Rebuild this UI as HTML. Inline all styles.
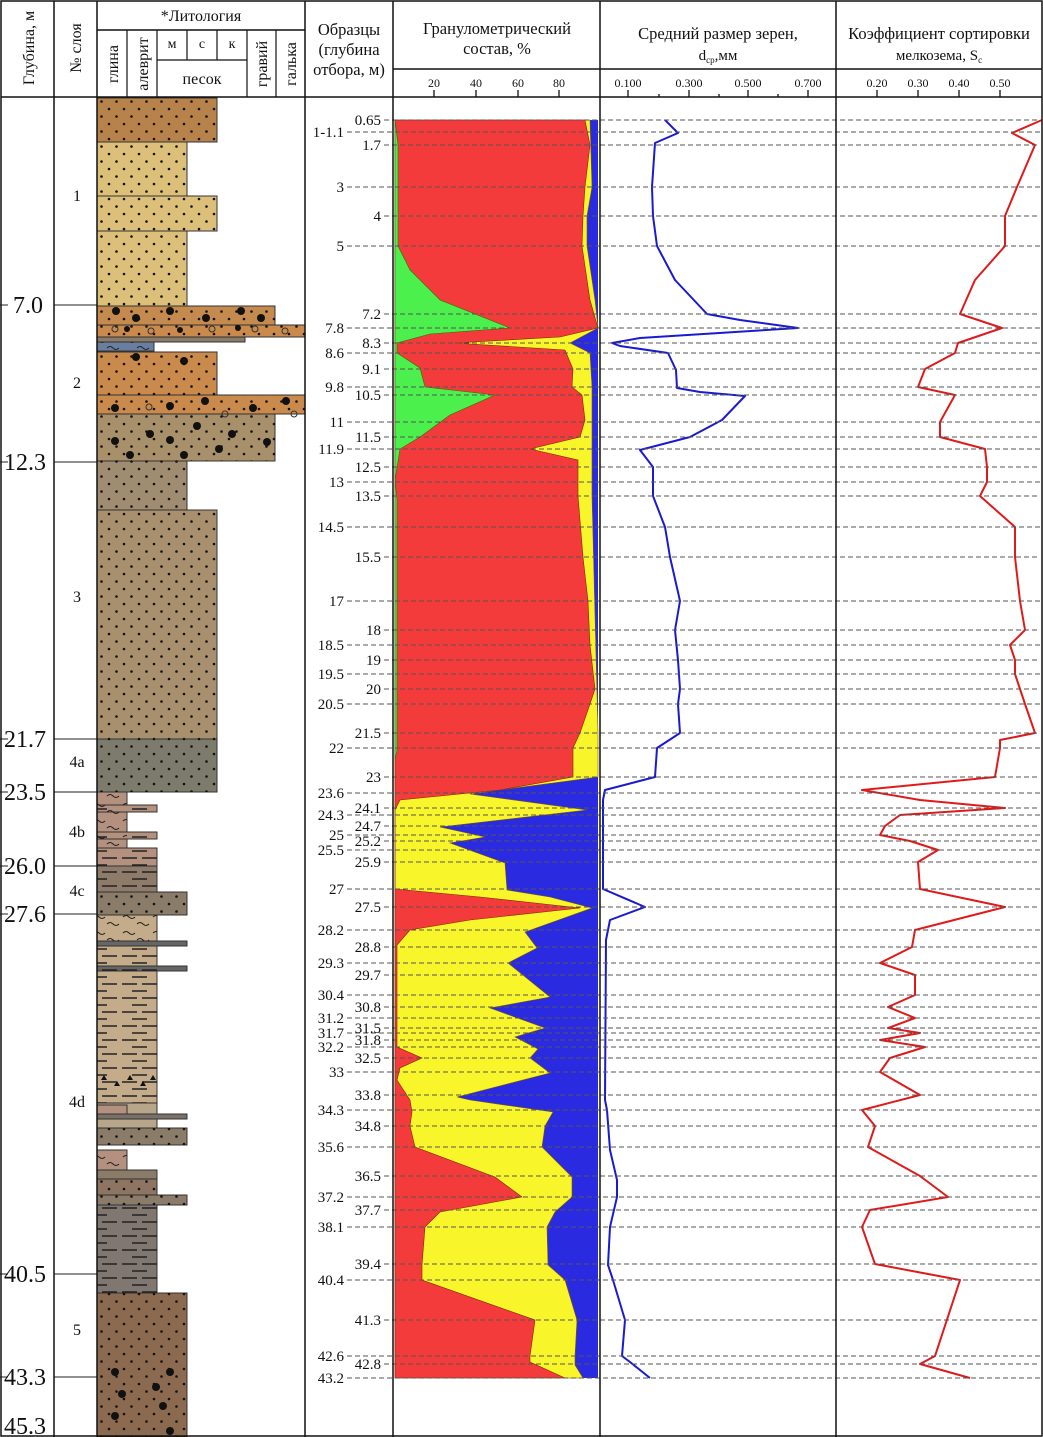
<!DOCTYPE html>
<html><head><meta charset="utf-8"><style>
html,body{margin:0;padding:0;background:#fff}
svg{display:block}
text{font-family:"Liberation Serif",serif;fill:#111}
</style></head><body>
<svg width="1043" height="1437" viewBox="0 0 1043 1437" xmlns="http://www.w3.org/2000/svg">
<defs>
<pattern id="dots" width="15" height="15" patternUnits="userSpaceOnUse"><circle cx="4" cy="4" r="1.3" fill="#111"/><circle cx="11.5" cy="11.5" r="1.3" fill="#111"/></pattern>
<pattern id="dash" width="40" height="14" patternUnits="userSpaceOnUse"><path d="M2 4H17M22 4H37M12 11H27" stroke="#222" stroke-width="1.4"/></pattern>
<pattern id="wave" width="30" height="16" patternUnits="userSpaceOnUse"><path d="M3 5q3-3 6 0t6 0M17 12q3-3 6 0t6 0" stroke="#222" fill="none" stroke-width="1"/></pattern>
</defs>

<!-- header text -->
<text transform="translate(34,48) rotate(-90)" text-anchor="middle" font-size="16">Глубина, м</text>
<text transform="translate(81,48) rotate(-90)" text-anchor="middle" font-size="16">№ слоя</text>
<text x="201" y="21" text-anchor="middle" font-size="16">*Литология</text>
<text transform="translate(118,64) rotate(-90)" text-anchor="middle" font-size="16">глина</text>
<text transform="translate(148,64) rotate(-90)" text-anchor="middle" font-size="16">алеврит</text>
<text x="172" y="48" text-anchor="middle" font-size="14">м</text>
<text x="202" y="48" text-anchor="middle" font-size="14">с</text>
<text x="232" y="48" text-anchor="middle" font-size="14">к</text>
<text x="202" y="84" text-anchor="middle" font-size="16">песок</text>
<text transform="translate(267,64) rotate(-90)" text-anchor="middle" font-size="16">гравий</text>
<text transform="translate(296,64) rotate(-90)" text-anchor="middle" font-size="16">галька</text>
<text x="349" y="35" text-anchor="middle" font-size="16.5">Образцы</text>
<text x="349" y="55" text-anchor="middle" font-size="16.5">(глубина</text>
<text x="349" y="75" text-anchor="middle" font-size="16.5">отбора, м)</text>
<text x="497" y="34" text-anchor="middle" font-size="16.5">Гранулометрический</text>
<text x="497" y="54" text-anchor="middle" font-size="16.5">состав, %</text>
<text x="718" y="39" text-anchor="middle" font-size="16.5">Средний размер зерен,</text>
<text x="718" y="60" text-anchor="middle" font-size="15">d<tspan font-size="9" dy="3">ср</tspan><tspan dy="-3">,мм</tspan></text>
<text x="939" y="39" text-anchor="middle" font-size="16.5">Коэффициент сортировки</text>
<text x="939" y="60" text-anchor="middle" font-size="15">мелкозема, S<tspan font-size="9" dy="3">c</tspan></text>
<g font-size="12" text-anchor="middle">
<text x="434" y="87">20</text><text x="476" y="87">40</text><text x="518" y="87">60</text><text x="559" y="87">80</text>
<text x="628" y="87">0.100</text><text x="689" y="87">0.300</text><text x="748" y="87">0.500</text><text x="808" y="87">0.700</text>
<text x="877" y="87">0.20</text><text x="918" y="87">0.30</text><text x="959" y="87">0.40</text><text x="1000" y="87">0.50</text>
</g>
<g stroke="#111" stroke-width="1.3">
<path d="M434 90V97M476 90V97M518 90V97M559 90V97M628 90V97M659 94V97M689 90V97M719 94V97M748 90V97M778 94V97M808 90V97M877 90V97M918 90V97M959 90V97M1000 90V97"/>
</g>

<!-- lithology blocks -->
<g stroke="#333" stroke-width="1">
<rect x="97" y="98" width="120" height="44" fill="#b8834a"/>
<rect x="97" y="142" width="90" height="54" fill="#dcc07a"/>
<rect x="97" y="196" width="120" height="35" fill="#dcc07a"/>
<rect x="97" y="231" width="90" height="75" fill="#dcc07a"/>
<rect x="97" y="306" width="178" height="19" fill="#c48a4e"/>
<rect x="97" y="325" width="208" height="12" fill="#c98a4c"/>
<rect x="97" y="337" width="148" height="5" fill="#8a7a68"/>
<rect x="97" y="342" width="57" height="9" fill="#6a7fa0"/>
<rect x="97" y="352" width="120" height="43" fill="#c98a4c"/>
<rect x="97" y="395" width="208" height="19" fill="#c98a4c"/>
<rect x="97" y="414" width="178" height="47" fill="#a8906a"/>
<rect x="97" y="461" width="90" height="49" fill="#a08c70"/>
<rect x="97" y="510" width="120" height="229" fill="#a8906e"/>
<rect x="97" y="739" width="120" height="53" fill="#7d7b6b"/>
<rect x="97" y="792" width="30" height="56" fill="#b3917e"/>
<rect x="97" y="805" width="60" height="7" fill="#b3917e"/>
<rect x="97" y="832" width="60" height="7" fill="#b3917e"/>
<rect x="97" y="848" width="60" height="18" fill="#b3917e"/>
<rect x="97" y="866" width="60" height="26" fill="#8e7b6a"/>
<rect x="97" y="892" width="90" height="23" fill="#8b7b69"/>
<rect x="97" y="915" width="60" height="195" fill="#c4ab8a"/>
<rect x="97" y="941" width="90" height="5" fill="#666"/>
<rect x="97" y="966" width="90" height="5" fill="#666"/>
<rect x="97" y="1103" width="60" height="40" fill="#b8a68a"/>
<rect x="97" y="1105" width="30" height="10" fill="#b3917e"/>
<rect x="97" y="1114" width="90" height="5" fill="#7a7068"/>
<rect x="97" y="1128" width="90" height="17" fill="#8b7b69"/>
<rect x="97" y="1150" width="30" height="20" fill="#b3917e"/>
<rect x="97" y="1170" width="60" height="9" fill="#8b7b69"/>
<rect x="97" y="1179" width="60" height="16" fill="#8e7562"/>
<rect x="97" y="1195" width="90" height="10" fill="#8b7b69"/>
<rect x="97" y="1205" width="60" height="88" fill="#7f7770"/>
<rect x="97" y="1293" width="90" height="144" fill="#8b6a50"/>
</g>
<g fill="url(#dots)">
<rect x="97" y="98" width="120" height="44"/><rect x="97" y="142" width="90" height="54"/><rect x="97" y="196" width="120" height="35"/><rect x="97" y="231" width="90" height="75"/>
<rect x="97" y="306" width="178" height="19"/><rect x="97" y="325" width="208" height="12"/>
<rect x="97" y="352" width="120" height="43"/><rect x="97" y="395" width="208" height="19"/><rect x="97" y="414" width="178" height="47"/>
<rect x="97" y="461" width="90" height="49"/><rect x="97" y="510" width="120" height="229"/><rect x="97" y="739" width="120" height="53"/>
<rect x="97" y="892" width="90" height="23"/><rect x="97" y="1128" width="90" height="17"/>
<rect x="97" y="1179" width="60" height="16"/><rect x="97" y="1195" width="90" height="10"/><rect x="97" y="1293" width="90" height="144"/>
</g>
<g fill="url(#dash)">
<rect x="97" y="848" width="60" height="44"/><rect x="97" y="946" width="60" height="157"/><rect x="97" y="1205" width="60" height="88"/><rect x="97" y="805" width="60" height="7"/><rect x="97" y="832" width="60" height="7"/>
</g>
<g fill="url(#wave)"><rect x="97" y="792" width="30" height="56"/><rect x="97" y="915" width="60" height="26"/><rect x="97" y="1150" width="30" height="20"/><rect x="97" y="342" width="57" height="9"/></g>
<g fill="#111">
<circle cx="116" cy="311" r="4"/><circle cx="170" cy="311" r="4"/><circle cx="241" cy="311" r="4"/><circle cx="136" cy="318" r="4"/><circle cx="206" cy="318" r="4"/><circle cx="261" cy="318" r="4"/>
<circle cx="127" cy="329" r="3"/><circle cx="180" cy="330" r="3"/><circle cx="238" cy="328" r="3"/>
<circle cx="136" cy="357" r="4"/><circle cx="184" cy="361" r="4"/><circle cx="115" cy="408" r="4"/><circle cx="170" cy="406" r="4"/><circle cx="205" cy="401" r="4"/><circle cx="253" cy="408" r="4"/><circle cx="286" cy="401" r="4"/>
<circle cx="197" cy="426" r="4"/><circle cx="150" cy="434" r="4"/><circle cx="232" cy="434" r="4"/><circle cx="115" cy="441" r="4"/><circle cx="170" cy="440" r="4"/><circle cx="267" cy="442" r="4"/><circle cx="219" cy="449" r="4"/><circle cx="130" cy="455" r="4"/><circle cx="184" cy="455" r="4"/>
<circle cx="115" cy="1372" r="4"/><circle cx="170" cy="1372" r="4"/><circle cx="156" cy="1387" r="4"/><circle cx="122" cy="1394" r="4"/><circle cx="163" cy="1406" r="4"/><circle cx="115" cy="1416" r="4"/><circle cx="170" cy="1431" r="4"/>
</g>
<g fill="none" stroke="#333"><circle cx="115" cy="329" r="3"/><circle cx="151" cy="331" r="3"/><circle cx="212" cy="329" r="3"/><circle cx="255" cy="329" r="3"/><circle cx="285" cy="331" r="3"/><circle cx="149" cy="407" r="3"/><circle cx="225" cy="414" r="3"/><circle cx="294" cy="414" r="3"/></g>
<g fill="#111"><path d="M101 1080l3-5 3 5zM114 1086l3-5 3 5zM127 1080l3-5 3 5zM140 1086l3-5 3 5zM150 1080l3-5 3 5z"/></g>

<!-- granulometry areas -->
<rect x="395" y="120" width="203" height="1258" fill="#2a2ae0"/>
<polygon fill="#f8f52a" stroke="#7a5a00" stroke-width="0.6" points="395,120 590,120 592,187 587,216 587,246 595,300 598,328 570,343 590,353 592,387 592,449 592,496 598,733 598,777 470,794 587,810 440,827 485,837 450,843 505,863 507,890 550,897 592,908 525,932 537,948 508,963 550,997 490,1008 545,1028 515,1037 538,1049 530,1058 550,1073 457,1097 470,1100 553,1112 545,1126 542,1147 572,1177 572,1197 555,1212 547,1227 548,1265 565,1280 577,1320 575,1356 575,1365 583,1378 395,1378"/>
<polygon fill="#f43b3b" stroke="#7a2a00" stroke-width="0.6" points="395,120 585,120 590,145 585,187 583,216 582,246 590,300 598,328 560,337 455,343 565,350 573,369 572,387 582,395 585,420 580,437 530,449 578,460 578,496 583,557 588,601 590,645 595,689 590,704 580,733 573,748 573,777 500,790 400,800 395,810 395,889 480,897 580,908 470,920 410,930 397,945 397,1047 422,1058 400,1068 397,1080 410,1100 412,1112 410,1126 415,1147 495,1177 522,1197 440,1212 425,1227 422,1265 422,1280 535,1320 530,1356 530,1362 565,1378 395,1378"/>
<polygon fill="#4cf04c" stroke="#3a6a00" stroke-width="0.6" points="395,120 398,145 398,246 410,270 440,300 510,328 430,334 397,343 397,353 420,368 425,387 495,395 450,415 420,437 400,449 395,480 397,500 397,750 395,760"/>

<!-- curves -->
<polyline fill="none" stroke="#1a1ad0" stroke-width="2" stroke-linejoin="round" points="665,120 678,133 655,143 652,187 653,216 657,246 675,280 707,314 740,320 798,328 640,338 612,343 620,346 668,353 676,370 677,388 700,392 745,396 722,420 690,437 640,450 653,467 653,482 653,496 665,527 670,557 680,601 675,630 678,660 680,689 678,704 680,733 657,748 655,777 605,790 603,800 603,830 603,889 645,907 610,920 606,940 605,1100 607,1110 610,1150 617,1180 617,1197 610,1227 608,1265 613,1280 625,1320 622,1356 630,1362 650,1378"/>
<polyline fill="none" stroke="#e01a1a" stroke-width="2" stroke-linejoin="round" points="1042,120 1012,133 1035,145 1017,187 1005,216 1005,246 975,280 960,314 1002,328 958,343 955,353 925,369 918,387 955,395 940,422 940,437 985,449 987,467 987,482 980,496 1015,527 1015,557 1020,601 1025,630 1010,645 1015,660 1015,674 1020,689 1025,704 1035,733 1000,740 1000,748 995,777 862,790 920,800 1005,808 900,815 885,826 880,835 910,841 938,850 918,862 920,889 1005,907 915,930 912,947 880,963 915,975 915,995 888,1007 915,1018 888,1028 920,1033 880,1040 925,1047 890,1058 880,1072 920,1095 862,1110 875,1126 868,1147 920,1176 948,1197 870,1210 862,1227 875,1264 960,1280 935,1356 920,1364 970,1378"/>

<!-- dashed sample lines -->
<g stroke="#555" stroke-width="1" stroke-dasharray="5,3">
<path d="M384 120H1040M347 132H1040M384 145H1040M347 187H1040M384 216H1040M347 246H1040M384 314H1040M347 328H1040M384 343H1040M347 353H1040M384 369H1040M347 387H1040M384 395H1040M347 422H1040M384 437H1040M347 449H1040M384 467H1040M347 482H1040M384 496H1040M347 527H1040M384 557H1040M347 601H1040M384 630H1040M347 645H1040M384 660H1040M347 674H1040M384 689H1040M347 704H1040M384 733H1040M347 748H1040M384 777H1040M347 793H1040M384 808H1040M347 815H1040M384 826H1040M347 835H1040M384 841H1040M347 850H1040M384 862H1040M347 889H1040M384 907H1040M347 930H1040M384 947H1040M347 963H1040M384 975H1040M347 995H1040M384 1007H1040M347 1018H1040M384 1028H1040M347 1033H1040M384 1040H1040M347 1047H1040M384 1058H1040M347 1072H1040M384 1095H1040M347 1110H1040M384 1126H1040M347 1147H1040M384 1176H1040M347 1197H1040M384 1210H1040M347 1227H1040M384 1264H1040M347 1280H1040M384 1320H1040M347 1356H1040M384 1364H1040M347 1378H1040"/>
</g>
<g font-size="15" text-anchor="end">
<text x="381" y="125">0.65</text><text x="344" y="137">1-1.1</text><text x="381" y="150">1.7</text><text x="344" y="192">3</text><text x="381" y="221">4</text><text x="344" y="251">5</text>
<text x="381" y="319">7.2</text><text x="344" y="333">7.8</text><text x="381" y="348">8.3</text><text x="344" y="358">8.6</text><text x="381" y="374">9.1</text><text x="344" y="392">9.8</text><text x="381" y="400">10.5</text>
<text x="344" y="427">11</text><text x="381" y="442">11.5</text><text x="344" y="454">11.9</text><text x="381" y="472">12.5</text><text x="344" y="487">13</text><text x="381" y="501">13.5</text><text x="344" y="532">14.5</text><text x="381" y="562">15.5</text>
<text x="344" y="606">17</text><text x="381" y="635">18</text><text x="344" y="650">18.5</text><text x="381" y="665">19</text><text x="344" y="679">19.5</text><text x="381" y="694">20</text><text x="344" y="709">20.5</text><text x="381" y="738">21.5</text><text x="344" y="753">22</text><text x="381" y="782">23</text>
<text x="344" y="798">23.6</text><text x="381" y="813">24.1</text><text x="344" y="820">24.3</text><text x="381" y="831">24.7</text><text x="344" y="840">25</text><text x="381" y="846">25.2</text><text x="344" y="855">25.5</text><text x="381" y="867">25.9</text>
<text x="344" y="894">27</text><text x="381" y="912">27.5</text><text x="344" y="935">28.2</text><text x="381" y="952">28.8</text><text x="344" y="968">29.3</text><text x="381" y="980">29.7</text><text x="344" y="1000">30.4</text><text x="381" y="1012">30.8</text>
<text x="344" y="1023">31.2</text><text x="381" y="1033">31.5</text><text x="344" y="1038">31.7</text><text x="381" y="1045">31.8</text><text x="344" y="1052">32.2</text><text x="381" y="1063">32.5</text><text x="344" y="1077">33</text><text x="381" y="1100">33.8</text>
<text x="344" y="1115">34.3</text><text x="381" y="1131">34.8</text><text x="344" y="1152">35.6</text><text x="381" y="1181">36.5</text><text x="344" y="1202">37.2</text><text x="381" y="1215">37.7</text><text x="344" y="1232">38.1</text>
<text x="381" y="1269">39.4</text><text x="344" y="1285">40.4</text><text x="381" y="1325">41.3</text><text x="344" y="1361">42.6</text><text x="381" y="1369">42.8</text><text x="344" y="1383">43.2</text>
</g>

<!-- depth markers -->
<g stroke="#222" stroke-width="1"><path d="M0 305H8M54 305H97M0 462H8M54 462H97M0 739H8M54 739H97M0 792H8M54 792H97M0 866H8M54 866H97M0 914H8M54 914H97M0 1274H8M54 1274H97M0 1377H8M54 1377H97"/></g>
<g font-size="24">
<text x="13" y="313">7.0</text><text x="4" y="470">12.3</text><text x="4" y="747">21.7</text><text x="4" y="800">23.5</text><text x="4" y="874">26.0</text><text x="4" y="922">27.6</text><text x="4" y="1282">40.5</text><text x="4" y="1385">43.3</text><text x="4" y="1434">45.3</text>
</g>
<g font-size="16" text-anchor="middle">
<text x="77" y="201">1</text><text x="77" y="388">2</text><text x="77" y="602">3</text><text x="77" y="767">4a</text><text x="77" y="837">4b</text><text x="77" y="896">4c</text><text x="77" y="1107">4d</text><text x="77" y="1335">5</text>
</g>

<!-- grid -->
<g stroke="#111" stroke-width="1.5" fill="none">
<rect x="1" y="1" width="1041" height="1435"/>
<path d="M54 1V1437M97 1V1437M305 1V1437M393 1V1437M600 1V1437M836 1V1437M1 97H1042M97 30H305M393 69H1042"/>
<path d="M127 30V97M157 30V97M187 30V60M217 30V60M247 30V97M276 30V97M157 60H247" stroke-width="1.2"/>
</g>
</svg>
</body></html>
